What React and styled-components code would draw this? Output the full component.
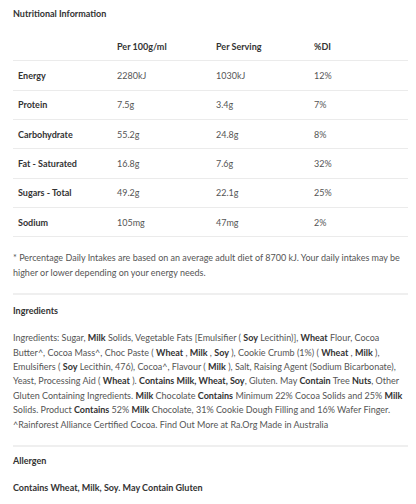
import React from 'react';
import styled, {createGlobalStyle} from 'styled-components';

const GlobalStyle = createGlobalStyle`
  body{
    margin:0;
    background:#fff;
    font-family: Lato, "Open Sans", sans-serif;
    color:#555;
  }
`

const rows = [
  ['Energy', '2280kJ', '1030kJ', '12%'],
  ['Protein', '7.5g', '3.4g', '7%'],
  ['Carbohydrate', '55.2g', '24.8g', '8%'],
  ['Fat - Saturated', '16.8g', '7.6g', '32%'],
  ['Sugars - Total', '49.2g', '22.1g', '25%'],
  ['Sodium', '105mg', '47mg', '2%'],
]

function App() {
  return (
    <>
      <GlobalStyle/>
      <Page>
        <Heading>Nutritional Information</Heading>
        <Table>
          <Row>
            <Cell/>
            <Cell $head>Per 100g/ml</Cell>
            <Cell $head>Per Serving</Cell>
            <Cell $head>%DI</Cell>
          </Row>
          {rows.map(r => (
            <Row key={r[0]}>
              <Cell $label>{r[0]}</Cell>
              <Cell>{r[1]}</Cell>
              <Cell>{r[2]}</Cell>
              <Cell>{r[3]}</Cell>
            </Row>
          ))}
        </Table>
        <Note>
          * Percentage Daily Intakes are based on an average adult diet of 8700 kJ. Your daily intakes may be higher or lower depending on your energy needs.
        </Note>
        <Divider/>
        <Heading>Ingredients</Heading>
        <Text>
          Ingredients: Sugar, <b>Milk</b> Solids, Vegetable Fats [Emulsifier ( <b>Soy</b> Lecithin)], <b>Wheat</b> Flour, Cocoa Butter^, Cocoa Mass^, Choc Paste ( <b>Wheat</b> , <b>Milk</b> , <b>Soy</b> ), Cookie Crumb (1%) ( <b>Wheat</b> , <b>Milk</b> ), Emulsifiers ( <b>Soy</b> Lecithin, 476), Cocoa^, Flavour ( <b>Milk</b> ), Salt, Raising Agent (Sodium Bicarbonate), Yeast, Processing Aid ( <b>Wheat</b> ). <b>Contains Milk, Wheat, Soy</b>, Gluten. May <b>Contain</b> Tree <b>Nuts</b>, Other Gluten Containing Ingredients. <b>Milk</b> Chocolate <b>Contains</b> Minimum 22% Cocoa Solids and 25% <b>Milk</b> Solids. Product <b>Contains</b> 52% <b>Milk</b> Chocolate, 31% Cookie Dough Filling and 16% Wafer Finger. ^Rainforest Alliance Certified Cocoa. Find Out More at Ra.Org Made in Australia
        </Text>
        <Divider $tight/>
        <Heading>Allergen</Heading>
        <Strong>Contains Wheat, Milk, Soy. May Contain Gluten</Strong>
      </Page>
    </>
  );
}

const Page = styled.div`
  padding: 6px 8px 0 13px;
  font-size: 9px;
`
const Heading = styled.h3`
  margin: 0;
  font-size: 9px;
  font-weight: 700;
  color: #333;
  line-height: 16px;
`
const Table = styled.div`
  margin-top: 10px;
`
const Row = styled.div`
  display: grid;
  grid-template-columns: 104px 99px 98px 1fr;
  align-items: center;
  height: 29.33px;
  border-bottom: 1px solid #ebebeb;
  box-sizing: border-box;
`
const Cell = styled.div`
  padding-left: ${p => p.$label ? '5px' : '0'};
  font-weight: ${p => (p.$label || p.$head) ? 700 : 400};
  color: ${p => (p.$label || p.$head) ? '#333' : '#555'};
`
const Note = styled.p`
  margin: 14px 0 0;
  line-height: 14.4px;
  color: #555;
`
const Divider = styled.hr`
  border: none;
  border-top: 2px solid #efefef;
  margin: 13px 0 ${p => p.$tight ? '6px' : '8px'};
`
const Text = styled.p`
  margin: 12px 0 0;
  line-height: 14.4px;
  color: #555;
  b{
    color:#333;
  }
`
const Strong = styled.p`
  margin: 12px 0 0;
  line-height: 14.4px;
  font-weight: 700;
  color: #333;
`

export default App;
